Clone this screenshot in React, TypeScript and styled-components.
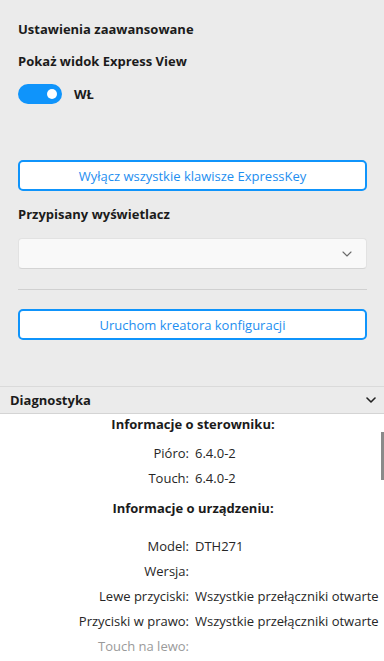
import { Fragment } from 'react';
import styled, { createGlobalStyle } from 'styled-components';

const GlobalStyle = createGlobalStyle`
  html, body {
    margin: 0;
    padding: 0;
    background: #ffffff;
  }
  body {
    font-family: 'Open Sans', 'Noto Sans', sans-serif;
    color: #1b1b1b;
    overflow: hidden;
  }
`;

const Page = styled.div`
  width: 384px;
  height: 661px;
  overflow: hidden;
  position: relative;
  display: flex;
  flex-direction: column;
`;

const Panel = styled.section`
  background: #ebebeb;
  padding: 20px 17px 0 18px;
  height: 366px;
  display: flex;
  flex-direction: column;
`;

const Heading = styled.div<{ top?: number }>`
  font-size: 13px;
  font-weight: 700;
  line-height: 18px;
  margin-top: ${(p) => p.top ?? 0}px;
  white-space: nowrap;
`;

const ToggleRow = styled.div`
  display: flex;
  align-items: center;
  gap: 12px;
  margin-top: 14px;
`;

const Switch = styled.div<{ on: boolean }>`
  width: 44px;
  height: 20px;
  border-radius: 10px;
  background: ${(p) => (p.on ? '#0f94fb' : '#c8c8c8')};
  display: flex;
  align-items: center;
  justify-content: ${(p) => (p.on ? 'flex-end' : 'flex-start')};
  padding: 0 5px;
  box-sizing: border-box;

  &::after {
    content: '';
    width: 10px;
    height: 10px;
    border-radius: 50%;
    background: #ffffff;
  }
`;

const SwitchLabel = styled.span`
  font-size: 13px;
  font-weight: 700;
`;

const OutlineButton = styled.button<{ top: number }>`
  margin-top: ${(p) => p.top}px;
  height: 31px;
  width: 100%;
  box-sizing: border-box;
  border: 2px solid #0f94fb;
  border-radius: 5px;
  background: #ffffff;
  color: #1d8ef0;
  font-family: inherit;
  font-size: 13px;
  cursor: pointer;
`;

const Select = styled.div`
  margin-top: 15px;
  height: 31px;
  box-sizing: border-box;
  border: 1px solid #e2e2e2;
  border-bottom-color: #d4d4d4;
  border-radius: 4px;
  background: #f9f9f9;
  display: flex;
  align-items: center;
  justify-content: flex-end;
  padding-right: 14px;
`;

const Divider = styled.hr`
  margin: 20px 0 0;
  border: none;
  height: 1px;
  background: #d0d0d0;
`;

const SectionHeader = styled.div`
  height: 28px;
  box-sizing: border-box;
  border-top: 1px solid #dadada;
  border-bottom: 1px solid #d4d4d4;
  background: #ebebeb;
  display: flex;
  align-items: center;
  justify-content: space-between;
  padding: 0 8px 0 10px;
  font-size: 13px;
  font-weight: 700;
`;

const Diagnostics = styled.section`
  flex: 1;
  background: #ffffff;
  display: flex;
  flex-direction: column;
`;

const InfoTitle = styled.div<{ top: number }>`
  text-align: center;
  font-size: 13px;
  font-weight: 700;
  line-height: 20px;
  margin-top: ${(p) => p.top}px;
  padding-left: 2px;
`;

const InfoGrid = styled.div<{ top: number }>`
  display: grid;
  grid-template-columns: 189px 1fr;
  column-gap: 6px;
  row-gap: 5px;
  margin-top: ${(p) => p.top}px;
  font-size: 13px;
  line-height: 20px;
  white-space: nowrap;
`;

const Label = styled.span<{ muted?: boolean }>`
  text-align: right;
  color: ${(p) => (p.muted ? '#9a9a9a' : '#262626')};
`;

const Value = styled.span`
  color: #262626;
  overflow: hidden;
`;

// pasek przewijania nad treścią diagnostyki
const ScrollThumb = styled.div`
  position: absolute;
  right: 0;
  top: 432px;
  width: 3px;
  height: 48px;
  background: #8a8a8a;
`;

const Chevron = ({ color, weight }: { color: string; weight: number }) => (
  <svg width="10" height="6" viewBox="0 0 10 6" fill="none">
    <path d="M1 1l4 4 4-4" stroke={color} strokeWidth={weight} strokeLinecap="round" strokeLinejoin="round" />
  </svg>
);

interface InfoRow {
  label: string;
  value: string;
  muted?: boolean;
}

const driverInfo: InfoRow[] = [
  { label: 'Pióro:', value: '6.4.0-2' },
  { label: 'Touch:', value: '6.4.0-2' },
];

const deviceInfo: InfoRow[] = [
  { label: 'Model:', value: 'DTH271' },
  { label: 'Wersja:', value: '' },
  { label: 'Lewe przyciski:', value: 'Wszystkie przełączniki otwarte' },
  { label: 'Przyciski w prawo:', value: 'Wszystkie przełączniki otwarte' },
  { label: 'Touch na lewo:', value: '', muted: true },
];

const renderRows = (rows: InfoRow[]) =>
  rows.map((r) => (
    <Fragment key={r.label}>
      <Label muted={r.muted}>{r.label}</Label>
      <Value>{r.value}</Value>
    </Fragment>
  ));

function App() {
  return (
    <>
      <GlobalStyle />
      <Page>
        <Panel>
          <Heading>Ustawienia zaawansowane</Heading>
          <Heading top={14}>Pokaż widok Express View</Heading>
          <ToggleRow>
            <Switch on />
            <SwitchLabel>WŁ</SwitchLabel>
          </ToggleRow>
          <OutlineButton top={56}>Wyłącz wszystkie klawisze ExpressKey</OutlineButton>
          <Heading top={14}>Przypisany wyświetlacz</Heading>
          <Select>
            <Chevron color="#6a6a6a" weight={1.1} />
          </Select>
          <Divider />
          <OutlineButton top={19}>Uruchom kreatora konfiguracji</OutlineButton>
        </Panel>
        <SectionHeader>
          <span>Diagnostyka</span>
          <Chevron color="#222" weight={1.6} />
        </SectionHeader>
        <Diagnostics>
          <InfoTitle top={0}>Informacje o sterowniku:</InfoTitle>
          <InfoGrid top={9}>{renderRows(driverInfo)}</InfoGrid>
          <InfoTitle top={10}>Informacje o urządzeniu:</InfoTitle>
          <InfoGrid top={18}>{renderRows(deviceInfo)}</InfoGrid>
        </Diagnostics>
        <ScrollThumb />
      </Page>
    </>
  );
}

export default App;
